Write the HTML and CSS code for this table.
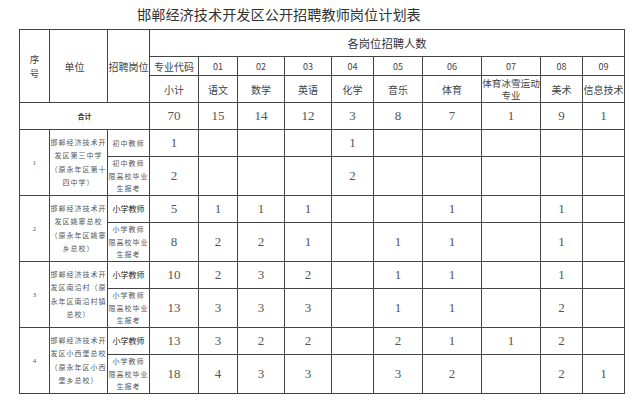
FILE: index.html
```html
<!DOCTYPE html>
<html lang="zh-CN">
<head>
<meta charset="utf-8">
<title>邯郸经济技术开发区公开招聘教师岗位计划表</title>
<link rel="stylesheet" href="styles.css">
</head>
<body>
<div class="page">
  <h1 class="title">邯郸经济技术开发区公开招聘教师岗位计划表</h1>
  <table class="plan">
    <colgroup>
      <col style="width:30px"><col style="width:58px"><col style="width:42px">
      <col style="width:49px"><col style="width:39px"><col style="width:47px">
      <col style="width:47px"><col style="width:42px"><col style="width:49px">
      <col style="width:59px"><col style="width:59px"><col style="width:42px">
      <col style="width:42px">
    </colgroup>
    <tr class="h1">
      <th rowspan="3" class="hd seqh">序<br>号</th>
      <th rowspan="3" class="hd unith">单位</th>
      <th rowspan="3" class="hd">招聘岗位</th>
      <th colspan="10" class="hd big">各岗位招聘人数</th>
    </tr>
    <tr class="h2">
      <th class="hd">专业代码</th><th class="hd code">01</th><th class="hd code">02</th><th class="hd code">03</th><th class="hd code">04</th><th class="hd code">05</th><th class="hd code">06</th><th class="hd code">07</th><th class="hd code">08</th><th class="hd code">09</th>
    </tr>
    <tr class="h3">
      <th class="hd">小计</th><th class="hd">语文</th><th class="hd">数学</th><th class="hd">英语</th><th class="hd">化学</th><th class="hd">音乐</th><th class="hd">体育</th><th class="hd two">体育冰雪运动<br>专业</th><th class="hd">美术</th><th class="hd">信息技术</th>
    </tr>
    <tr class="r27">
      <td colspan="3" class="total">合计</td>
      <td class="n">70</td><td class="n">15</td><td class="n">14</td><td class="n">12</td><td class="n">3</td><td class="n">8</td><td class="n">7</td><td class="n">1</td><td class="n">9</td><td class="n">1</td>
    </tr>

    <tr class="r27">
      <td rowspan="2" class="seq">1</td>
      <td rowspan="2" class="unit">邯郸经济技术开发区第三中学（原永年区第十四中学）</td>
      <td class="pos">初中教师</td>
      <td class="n">1</td><td class="n"></td><td class="n"></td><td class="n"></td><td class="n">1</td><td class="n"></td><td class="n"></td><td class="n"></td><td class="n"></td><td class="n"></td>
    </tr>
    <tr class="r40">
      <td class="pos">初中教师<br>限高校毕业<br>生报考</td>
      <td class="n">2</td><td class="n"></td><td class="n"></td><td class="n"></td><td class="n">2</td><td class="n"></td><td class="n"></td><td class="n"></td><td class="n"></td><td class="n"></td>
    </tr>

    <tr class="r27">
      <td rowspan="2" class="seq">2</td>
      <td rowspan="2" class="unit">邯郸经济技术开发区姚寨总校（原永年区姚寨乡总校）</td>
      <td class="pos main">小学教师</td>
      <td class="n">5</td><td class="n">1</td><td class="n">1</td><td class="n">1</td><td class="n"></td><td class="n"></td><td class="n">1</td><td class="n"></td><td class="n">1</td><td class="n"></td>
    </tr>
    <tr class="r40">
      <td class="pos">小学教师<br>限高校毕业<br>生报考</td>
      <td class="n">8</td><td class="n">2</td><td class="n">2</td><td class="n">1</td><td class="n"></td><td class="n">1</td><td class="n">1</td><td class="n"></td><td class="n">1</td><td class="n"></td>
    </tr>

    <tr class="r28">
      <td rowspan="2" class="seq">3</td>
      <td rowspan="2" class="unit">邯郸经济技术开发区南沿村（原永年区南沿村镇总校）</td>
      <td class="pos main">小学教师</td>
      <td class="n">10</td><td class="n">2</td><td class="n">3</td><td class="n">2</td><td class="n"></td><td class="n">1</td><td class="n">1</td><td class="n"></td><td class="n">1</td><td class="n"></td>
    </tr>
    <tr class="r40">
      <td class="pos">小学教师<br>限高校毕业<br>生报考</td>
      <td class="n">13</td><td class="n">3</td><td class="n">3</td><td class="n">3</td><td class="n"></td><td class="n">1</td><td class="n">1</td><td class="n"></td><td class="n">2</td><td class="n"></td>
    </tr>

    <tr class="r27">
      <td rowspan="2" class="seq">4</td>
      <td rowspan="2" class="unit">邯郸经济技术开发区小西堡总校（原永年区小西堡乡总校）</td>
      <td class="pos main">小学教师</td>
      <td class="n">13</td><td class="n">3</td><td class="n">2</td><td class="n">2</td><td class="n"></td><td class="n">2</td><td class="n">1</td><td class="n">1</td><td class="n">2</td><td class="n"></td>
    </tr>
    <tr class="r40">
      <td class="pos">小学教师<br>限高校毕业<br>生报考</td>
      <td class="n">18</td><td class="n">4</td><td class="n">3</td><td class="n">3</td><td class="n"></td><td class="n">3</td><td class="n">2</td><td class="n"></td><td class="n">2</td><td class="n">1</td>
    </tr>
  </table>
</div>
</body>
</html>
```
FILE: styles.css
```css
html, body {
  margin: 0;
  padding: 0;
  background: #ffffff;
}
.page {
  width: 640px;
  height: 402px;
  overflow: hidden;
  font-family: "Noto Sans CJK SC", "Noto Sans", sans-serif;
  color: #444;
}
.title {
  margin: 0;
  height: 29px;
  line-height: 29px;
  padding-left: 137px;
  font-size: 14.2px;
  font-weight: normal;
  color: #333;
  letter-spacing: 0;
}
.plan {
  margin-left: 19px;
  border-collapse: collapse;
  table-layout: fixed;
  width: 606px;
}
.plan th, .plan td {
  border: 1px solid #444;
  padding: 0;
  text-align: center;
  vertical-align: middle;
  overflow: hidden;
}
.h1 { height: 27px; }
.h2 { height: 19px; }
.h3 { height: 27px; }
.r27 { height: 27px; }
.r28 { height: 27px; }
.r40 { height: 39px; }
.hd {
  font-weight: normal;
  font-size: 10px;
  line-height: 13px;
  color: #444;
  white-space: nowrap;
}
.hd.code { font-size: 9px; }
.hd.big { font-size: 11.3px; color: #333; }
.hd.seqh { font-size: 9.5px; line-height: 14px; }
.hd.unith { padding-right: 8px; }
.hd.two { font-size: 9.6px; line-height: 12.5px; }
.n {
  font-family: "Liberation Serif", "DejaVu Serif", serif;
  font-size: 13px;
  line-height: 14px;
  color: #555;
}
.total {
  font-size: 7px;
  font-weight: bold;
  color: #333;
  padding-right: 8px;
}
.seq {
  font-size: 7px;
  color: #555;
  font-family: "Liberation Serif", serif;
}
.unit {
  font-size: 7px;
  letter-spacing: 1px;
  line-height: 13.5px;
  color: #555;
  padding: 0 0 0 1px;
}
.pos {
  font-size: 7px;
  letter-spacing: 1px;
  line-height: 12.5px;
  color: #555;
  text-align: left;
  padding-left: 1px;
}
.pos.main {
  font-size: 8px;
  line-height: 12px;
  letter-spacing: 0;
  text-align: center;
  color: #222;
}
```
